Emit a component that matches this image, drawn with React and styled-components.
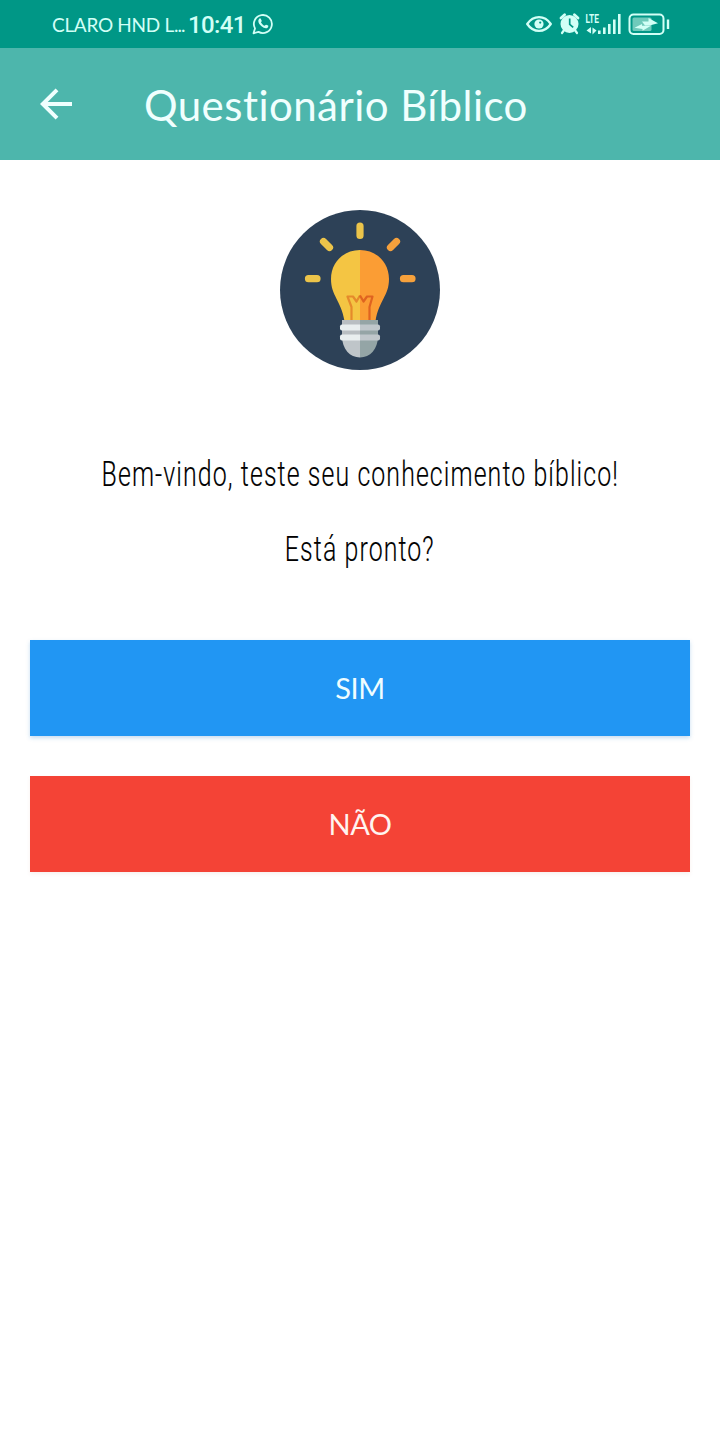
import React from "react";
import styled, { createGlobalStyle } from "styled-components";

const Global = createGlobalStyle`
  *, *::before, *::after { box-sizing: border-box; }
  body { margin: 0; background: #fff; }
`;

const Screen = styled.div`
  min-height: 1448px;
  display: flex;
  flex-direction: column;
  background: #fff;
  font-family: Lato, sans-serif;
`;

const StatusBar = styled.div`
  height: 48px;
  display: flex;
  align-items: center;
  justify-content: space-between;
  padding: 0 50px 0 52px;
  background: #009786;
  color: #d2fff6;
`;

const StatusGroup = styled.div`
  display: flex;
  align-items: center;
  height: 48px;
`;

const Carrier = styled.span`
  width: 136px;
  font-size: 19px;
  line-height: 24px;
  letter-spacing: -0.3px;
  padding-top: 1px;
  white-space: nowrap;
`;

const Dots = styled.span`
  letter-spacing: -1px;
`;

const Clock = styled.span`
  width: 64px;
  font-family: Roboto, sans-serif;
  font-weight: 500;
  font-size: 24px;
  line-height: 28px;
  letter-spacing: -0.6px;
  padding-top: 1px;
`;

const Header = styled.header`
  height: 112px;
  display: flex;
  align-items: center;
  padding-left: 40px;
  background: #4db6ac;
  color: #f0fffe;
`;

const BackButton = styled.button`
  width: 104px;
  height: 48px;
  padding: 0;
  border: 0;
  background: none;
  color: inherit;
  display: flex;
  align-items: center;
`;

const Title = styled.h1`
  margin: 0;
  padding-top: 1px;
  font-weight: 400;
  font-size: 42px;
  line-height: 52px;
  letter-spacing: 0.45px;
  white-space: nowrap;
`;

const Content = styled.main`
  display: flex;
  flex-direction: column;
  padding: 50px 30px 0;
`;

const Badge = styled.div`
  align-self: center;
  width: 160px;
  height: 160px;
  margin-bottom: 67px;
`;

const Message = styled.p`
  align-self: center;
  margin: 0;
  height: 75px;
  font-family: Roboto, sans-serif;
  font-weight: 300;
  font-size: 34.5px;
  line-height: 75px;
  letter-spacing: 1.5px;
  -webkit-text-stroke: 0.15px currentColor;
  color: #000;
  white-space: nowrap;
  transform: scaleX(0.722);
`;

const Actions = styled.div`
  display: flex;
  flex-direction: column;
  gap: 40px;
  margin-top: 53px;
`;

const ActionButton = styled.button`
  height: 96px;
  border: 0;
  padding: 0;
  background: ${(p) => p.$color};
  color: ${(p) => p.$ink};
  font-family: Lato, sans-serif;
  font-size: 29px;
  line-height: 36px;
  letter-spacing: -0.5px;
  box-shadow: 0 2px 4px ${(p) => p.$shadow};
`;

const WhatsAppIcon = () => (
  <svg width="22" height="22" viewBox="0 0 22 22" fill="none">
    <path d="M1.5 20.3 3 15.4A9 9 0 1 1 6.5 18.9Z" stroke="currentColor" strokeWidth="1.8" strokeLinejoin="round" />
    <path d="M7.3 5.7c.6-.6 1.3-.4 1.6.2l.8 1.8c.2.5-.5 1.1-.8 1.6.8 1.6 2 2.8 3.7 3.5.5-.4 1-1.4 1.6-1.1l1.9.9c.6.4.1 1.6-.5 2.1-1.5 1.2-4 .3-6.1-1.4-1.8-1.5-3.3-3.6-3.2-5.6 0-.8.4-1.4 1-2z" fill="currentColor" />
  </svg>
);

const SystemIcons = () => (
  <svg width="145" height="28" viewBox="0 0 145 28" fill="none">
    <path d="M2.2 14C8.5 4.8 19.5 4.8 25.8 14 19.5 23.2 8.5 23.2 2.2 14Z" stroke="currentColor" strokeWidth="2.3" strokeLinejoin="round" />
    <circle cx="14" cy="14" r="4.6" fill="currentColor" />
    <circle cx="15.2" cy="12.6" r="1.1" fill="#009786" />
    <circle cx="44.5" cy="14" r="9" fill="currentColor" />
    <path d="M36 8 39.6 4.800M53 8 49.400 4.800" stroke="currentColor" strokeWidth="2.800" strokeLinecap="round" />
    <path d="M38.800 20.500 37 23M50.200 20.500 52 23" stroke="currentColor" strokeWidth="2.200" strokeLinecap="round" />
    <path d="M44.700 8.500V14.300L48.200 17.400" stroke="#009786" strokeWidth="1.700" />
    <text x="60.500" y="13" fill="currentColor" fontFamily="Roboto, sans-serif" fontWeight="700" fontSize="12.500" textLength="13.500" lengthAdjust="spacingAndGlyphs">LTE</text>
    <path d="M61.500 20.500 66 17V23.500ZM71.500 20.500 67.500 24.500V17.500Z" fill="currentColor" />
    <path d="M74.300 20.500V24M79.300 17.500V24M84.300 14V24M89.300 9.500V24M94.300 4V24" stroke="currentColor" strokeWidth="2.600" />
    <rect x="104.500" y="4.500" width="34" height="19.500" rx="4" stroke="currentColor" strokeWidth="2" />
    <rect x="107.500" y="7.500" width="19" height="13.500" rx="1.500" fill="#6fcabb" />
    <path d="M109.500 17.700 117 14V15.800H126L117.500 20.800V19Z" fill="currentColor" />
    <path d="M117 11.500H123.500V8L133 13.200 124.500 15.500H120Z" fill="currentColor" />
    <path d="M143 9.500V19" stroke="currentColor" strokeWidth="2.400" />
  </svg>
);

const BackArrow = () => (
  <svg width="33" height="32" viewBox="0 0 33 32" fill="none">
    <path d="M32 16H3M17 1.8 2.8 16 17 30.2" stroke="currentColor" strokeWidth="4" />
  </svg>
);

const Bulb = () => (
  <svg width="160" height="160" viewBox="0 0 160 160" fill="none">
    <defs>
      <clipPath id="leftHalf"><rect width="80" height="160" /></clipPath>
      <clipPath id="rightHalf"><rect x="80" width="80" height="160" /></clipPath>
      <path id="glass" d="M80 40C63.500 40 51 52.500 51 69 51 86 61 90 64.500 111H95.500C99 90 109 86 109 69 109 52.500 96.500 40 80 40Z" />
      <path id="base" d="M62 126H98C98 139 90 147.500 80 147.500S62 139 62 126Z" />
    </defs>
    <circle cx="80" cy="80" r="80" fill="#2d4157" />
    <g strokeWidth="7.200" strokeLinecap="round">
      <path d="M80 16V25.500M43.500 31.500 49.500 37.500M28.500 68.700H37" stroke="#ecc44a" />
      <path d="M116.500 31.500 110.500 37.500M123.500 68.700H132" stroke="#f6a13c" />
    </g>
    <use href="#glass" fill="#f4c543" clipPath="url(#leftHalf)" />
    <use href="#glass" fill="#fb9d34" clipPath="url(#rightHalf)" />
    <path d="M71.500 111V97L67.500 86.500H73L76.500 91.500 80 85.500" stroke="#e58a2b" strokeWidth="2.200" strokeLinejoin="round" />
    <path d="M80 85.500 83.500 91.500 87 86.500H92.500L89.500 97V111" stroke="#df6320" strokeWidth="2.200" strokeLinejoin="round" />
    <path d="M62 110H80V128H62Z" fill="#b9bec2" />
    <path d="M80 110H98V128H80Z" fill="#95a5a6" />
    <use href="#base" fill="#bfc5c9" clipPath="url(#leftHalf)" />
    <use href="#base" fill="#94a5a6" clipPath="url(#rightHalf)" />
    <rect x="60" y="114.500" width="40" height="6" rx="2" fill="#e9eeef" clipPath="url(#leftHalf)" />
    <rect x="60" y="114.500" width="40" height="6" rx="2" fill="#c0c7cb" clipPath="url(#rightHalf)" />
    <rect x="60" y="124.500" width="40" height="6" rx="2" fill="#e9eeef" clipPath="url(#leftHalf)" />
    <rect x="60" y="124.500" width="40" height="6" rx="2" fill="#c0c7cb" clipPath="url(#rightHalf)" />
  </svg>
);

export default function App() {
  return (
    <Screen>
      <Global />
      <StatusBar>
        <StatusGroup>
          <Carrier>CLARO HND L<Dots>...</Dots></Carrier>
          <Clock>10:41</Clock>
          <WhatsAppIcon />
        </StatusGroup>
        <StatusGroup>
          <SystemIcons />
        </StatusGroup>
      </StatusBar>
      <Header>
        <BackButton aria-label="Voltar"><BackArrow /></BackButton>
        <Title>Questionário Bíblico</Title>
      </Header>
      <Content>
        <Badge><Bulb /></Badge>
        <Message>Bem-vindo, teste seu conhecimento bíblico!</Message>
        <Message>Está pronto?</Message>
        <Actions>
          <ActionButton $color="#2196f3" $ink="#effdff" $shadow="rgba(33, 120, 200, 0.25)">SIM</ActionButton>
          <ActionButton $color="#f44336" $ink="#fff4f0" $shadow="rgba(160, 60, 40, 0.08)">NÃO</ActionButton>
        </Actions>
      </Content>
    </Screen>
  );
}
